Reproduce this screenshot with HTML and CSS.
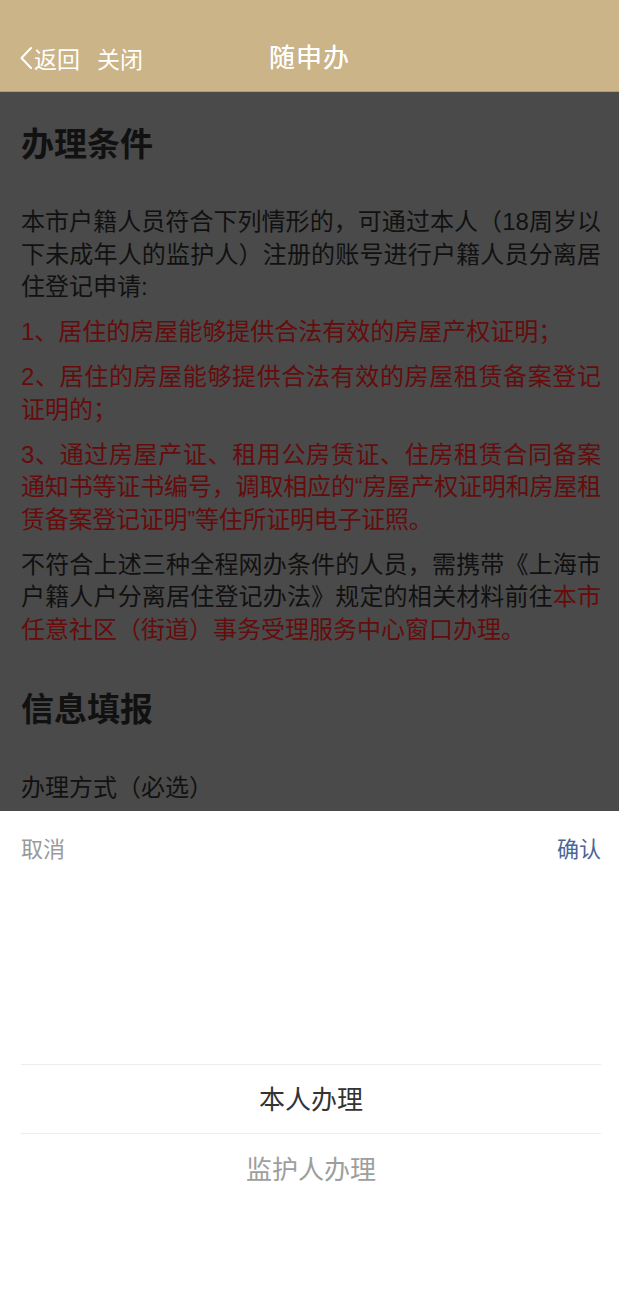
FILE: index.html
```html
<!DOCTYPE html>
<html lang="zh-CN">
<head>
<meta charset="utf-8">
<title>随申办</title>
<link rel="stylesheet" href="styles.css">
</head>
<body>
<div class="app">
  <header class="topbar">
    <div class="nav">
      <div class="nav-left">
        <span class="back">
          <svg class="chev" width="12" height="22" viewBox="0 0 12 22"><polyline points="11,1 1.5,11 11,21" fill="none" stroke="#fff" stroke-width="2" stroke-linecap="round" stroke-linejoin="round"/></svg>
          <span>返回</span>
        </span>
        <span class="close">关闭</span>
      </div>
      <div class="nav-title">随申办</div>
      <div class="nav-right"></div>
    </div>
  </header>

  <main class="content">
    <h2 class="section-title">办理条件</h2>
    <p class="para">本市户籍人员符合下列情形的，可通过本人（18周岁以下未成年人的监护人）注册的账号进行户籍人员分离居住登记申请:</p>
    <p class="para red">1、居住的房屋能够提供合法有效的房屋产权证明；</p>
    <p class="para red">2、居住的房屋能够提供合法有效的房屋租赁备案登记证明的；</p>
    <p class="para red tight">3、通过房屋产证、租用公房赁证、住房租赁合同备案通知书等证书编号，调取相应的“房屋产权证明和房屋租赁备案登记证明”等住所证明电子证照。</p>
    <p class="para">不符合上述三种全程网办条件的人员，需携带《上海市户籍人户分离居住登记办法》规定的相关材料前往<span class="red">本市任意社区（街道）事务受理服务中心窗口办理。</span></p>
    <h2 class="section-title second">信息填报</h2>
    <div class="field-label">办理方式（必选）</div>
  </main>

  <section class="sheet">
    <div class="sheet-bar">
      <span class="cancel">取消</span>
      <span class="confirm">确认</span>
    </div>
    <div class="picker">
      <div class="picker-item selected">本人办理</div>
      <div class="picker-item other">监护人办理</div>
    </div>
  </section>
</div>
</body>
</html>
```
FILE: styles.css
```css
* { box-sizing: border-box; }
html, body { margin: 0; padding: 0; }
body {
  font-family: "Liberation Sans", "Noto Sans CJK SC", sans-serif;
  background: #ffffff;
}
.app {
  width: 619px;
  height: 1290px;
  display: flex;
  flex-direction: column;
  overflow: hidden;
}
.topbar {
  background: #cbb487;
  height: 92px;
  padding-top: 24px;
  border-bottom: 1px solid #b39d70;
  flex: none;
}
.nav {
  height: 67px;
  display: grid;
  grid-template-columns: 1fr auto 1fr;
  align-items: center;
  color: #fff;
}
.nav-left {
  display: flex;
  align-items: center;
  padding-left: 20px;
  font-size: 23px;
  gap: 17px;
}
.back { display: flex; align-items: center; }
.chev { display: block; margin-right: 2px; }
.nav-title {
  font-size: 26px;
  font-weight: 400;
  letter-spacing: 1px;
  padding-bottom: 4px;
  text-shadow: 0 0 0.4px #fff;
}
.content {
  background: #4a4a4a;
  height: 719px;
  flex: none;
  overflow: hidden;
  padding: 33px 18px 0 21px;
  color: #111;
}
.section-title {
  margin: 0;
  font-size: 33px;
  line-height: 40px;
  font-weight: 700;
  color: #111;
}
.section-title.second { margin-top: 44px; }
.para {
  margin: 41px 0 0;
  font-size: 24px;
  line-height: 32.5px;
  text-align: justify;
}
.para + .para { margin-top: 12.5px; }
.para.tight { letter-spacing: -0.25px; }
.red { color: #660c0c; }
.field-label {
  margin-top: 42px;
  font-size: 24px;
  line-height: 32px;
}
.sheet {
  flex: 1;
  background: #fff;
  padding: 0 18px 0 21px;
}
.sheet-bar {
  height: 72px;
  display: flex;
  align-items: center;
  justify-content: space-between;
  font-size: 22px;
}
.cancel { color: #9a9a9a; }
.confirm { color: #4c6496; }
.picker {
  padding-top: 181px;
}
.picker-item {
  height: 70px;
  display: flex;
  align-items: center;
  justify-content: center;
  font-size: 26px;
  padding-bottom: 3px;
}
.picker-item.selected {
  color: #333;
  border-top: 1px solid #ececec;
  border-bottom: 1px solid #ececec;
}
.picker-item.other { color: #9e9e9e; }
```
